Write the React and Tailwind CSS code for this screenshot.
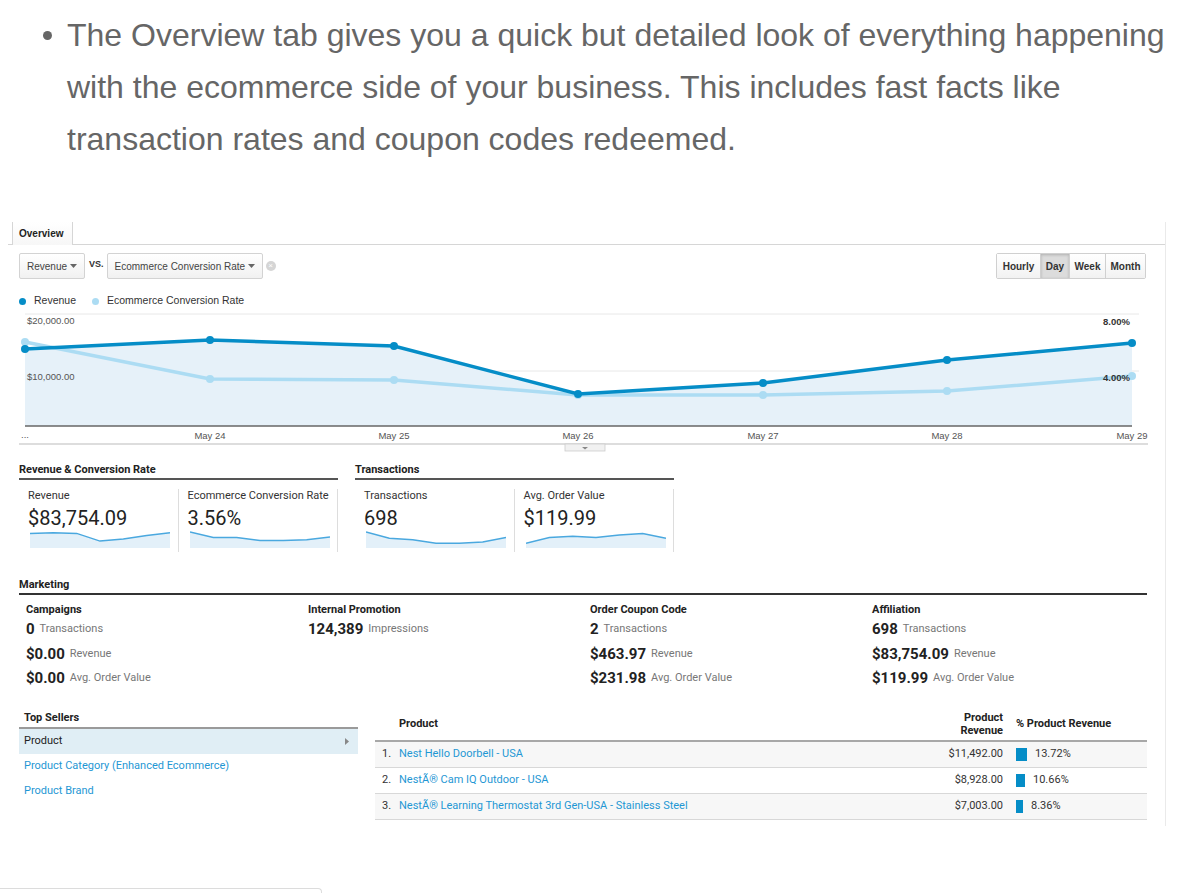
import React from 'react';

const BLUE = '#058dc7';
const LIGHT = '#acdcf3';

const chartX = [6, 191, 375, 559, 744, 928, 1113];
const revenueY = [39, 30, 36, 84, 73, 50, 33];
const convY = [32, 69, 70, 85, 85, 81, 66];
const xLabels = ['May 24', 'May 25', 'May 26', 'May 27', 'May 28', 'May 29'];

const pts = (ys) => chartX.map((x, i) => `${x},${ys[i]}`).join(' ');

const Caret = () => (
    <svg width="7" height="4" viewBox="0 0 7 4" className="shrink-0">
        <path d="M0 0h7L3.5 4z" fill="#666" />
    </svg>
);

const Dropdown = ({ label, className }) => (
    <div className={`h-[26px] flex items-center justify-between whitespace-nowrap pl-[7px] pr-[7px] border border-[#d3d3d3] rounded-[2px] bg-gradient-to-b from-white to-[#f1f1f1] text-[10px] text-[#444] ${className}`}>
        <span>{label}</span>
        <Caret />
    </div>
);

const Chart = () => (
    <svg width="1129" height="142" viewBox="0 0 1129 142" className="block mt-[2px]">
        <line x1="6" y1="4" x2="1120" y2="4" stroke="#e8e8e8" />
        <line x1="6" y1="61" x2="1120" y2="61" stroke="#e8e8e8" />
        <polygon points={`6,116 ${pts(revenueY)} 1113,116`} fill="#e6f1f9" />
        <polyline points={pts(convY)} fill="none" stroke={LIGHT} strokeWidth="3.5" />
        {chartX.map((x, i) => (
            <circle key={'c' + i} cx={x} cy={convY[i]} r="4" fill={LIGHT} />
        ))}
        <polyline points={pts(revenueY)} fill="none" stroke={BLUE} strokeWidth="3.5" />
        {chartX.map((x, i) => (
            <circle key={'r' + i} cx={x} cy={revenueY[i]} r="4" fill={BLUE} />
        ))}
        <line x1="6" y1="116" x2="1113" y2="116" stroke="#666" strokeWidth="1.5" />
        <g fontFamily="'Liberation Sans', Arial, sans-serif" fontSize="9.5" fill="#555">
            <text x="8" y="14">$20,000.00</text>
            <text x="8" y="70">$10,000.00</text>
            <text x="1111" y="15" textAnchor="end" fill="#333" fontWeight="bold">8.00%</text>
            <text x="1111" y="71" textAnchor="end" fill="#333" fontWeight="bold">4.00%</text>
            <text x="2" y="128">...</text>
            {xLabels.map((l, i) => (
                <text key={l} x={chartX[i + 1]} y="129" textAnchor="middle">{l}</text>
            ))}
        </g>
        <line x1="0" y1="134" x2="1129" y2="134" stroke="#ddd" strokeWidth="2" />
        <rect x="546" y="134" width="40" height="7" fill="#f1f1f1" stroke="#ccc" strokeWidth="0.8" />
        <path d="M563 137h6l-3 2.5z" fill="#888" />
    </svg>
);

const Sparkline = ({ values }) => {
    const w = 140;
    const h = 18;
    const step = w / (values.length - 1);
    const line = values.map((v, i) => `${(i * step).toFixed(1)},${(2 + v * 14).toFixed(1)}`).join(' ');
    return (
        <svg width={w} height={h} viewBox={`0 0 ${w} ${h}`} className="block mt-[1px] ml-[2px]">
            <polygon points={`0,${h} ${line} ${w},${h}`} fill="#e3f0f9" />
            <polyline points={line} fill="none" stroke="#4aa8df" strokeWidth="1.5" />
        </svg>
    );
};

const Card = ({ label, value, spark }) => (
    <div className="w-1/2 h-[63px] border-r border-[#ddd] pl-[9px]">
        <div className="text-[11px] leading-[14px] text-[#333]">{label}</div>
        <div className="mt-[4px] text-[20px] leading-[22px] text-[#222]">{value}</div>
        <Sparkline values={spark} />
    </div>
);

const Group = ({ title, cards }) => (
    <div className="w-[319px]">
        <div className="text-[11px] leading-[14px] font-bold text-[#222] pb-[1px] border-b-2 border-[#555]">{title}</div>
        <div className="flex mt-[9px]">
            {cards.map((c) => (
                <Card key={c.label} {...c} />
            ))}
        </div>
    </div>
);

const marketing = [
    { title: 'Campaigns', rows: [['0', 'Transactions'], ['$0.00', 'Revenue'], ['$0.00', 'Avg. Order Value']] },
    { title: 'Internal Promotion', rows: [['124,389', 'Impressions']] },
    { title: 'Order Coupon Code', rows: [['2', 'Transactions'], ['$463.97', 'Revenue'], ['$231.98', 'Avg. Order Value']] },
    { title: 'Affiliation', rows: [['698', 'Transactions'], ['$83,754.09', 'Revenue'], ['$119.99', 'Avg. Order Value']] },
];

const products = [
    { name: 'Nest Hello Doorbell - USA', rev: '$11,492.00', pct: '13.72%', bar: 11 },
    { name: 'NestÃ® Cam IQ Outdoor - USA', rev: '$8,928.00', pct: '10.66%', bar: 9 },
    { name: 'NestÃ® Learning Thermostat 3rd Gen-USA - Stainless Steel', rev: '$7,003.00', pct: '8.36%', bar: 7 },
];

export default function App() {
    return (
        <div className="w-[1189px] min-h-[893px] bg-white overflow-hidden">
            <div className="pt-[9px] flex font-['Liberation_Sans',Arial,sans-serif] text-[32px] leading-[52px] text-[#666]">
                <div className="w-[67px] flex justify-end pr-[15px] pt-[22px]">
                    <span className="block w-[9px] h-[9px] rounded-full bg-[#666]" />
                </div>
                <div>
                    <div className="whitespace-nowrap">The Overview tab gives you a quick but detailed look of everything happening</div>
                    <div className="whitespace-nowrap">with the ecommerce side of your business. This includes fast facts like</div>
                    <div className="whitespace-nowrap">transaction rates and coupon codes redeemed.</div>
                </div>
            </div>

            <div className="mt-[57px] ml-[8px] w-[1158px] border-r border-[#eaeaea] pb-[6px] font-['Roboto',sans-serif]">
                <div className="h-[23px] border-b border-[#d6d6d6] pl-[4px] flex items-end">
                    <div className="h-[23px] -mb-px w-[61px] pl-[6px] flex items-center border-l border-r border-[#d6d6d6] bg-gradient-to-b from-white to-[#f7f7f7] font-['Liberation_Sans',Arial,sans-serif] text-[10px] font-bold text-[#222]">
                        Overview
                    </div>
                </div>

                <div className="pl-[11px] pr-[18px]">
                    <div className="mt-[8px] flex items-center font-['Liberation_Sans',Arial,sans-serif]">
                        <Dropdown label="Revenue" className="w-[66px]" />
                        <span className="ml-[4px] mr-[3px] self-start mt-[5px] text-[9px] font-bold text-[#333]">VS.</span>
                        <Dropdown label="Ecommerce Conversion Rate" className="w-[156px]" />
                        <span className="ml-[3px] w-[10px] h-[10px] rounded-full bg-[#d5d5d5] flex items-center justify-center text-white text-[8px] leading-none">×</span>
                        <div className="ml-auto mr-[1px] flex h-[26px] border border-[#d0d0d0] rounded-[2px] text-[10px] font-bold text-[#333]">
                            <div className="w-[43px] flex items-center justify-center bg-gradient-to-b from-white to-[#f2f2f2]">Hourly</div>
                            <div className="w-[29px] flex items-center justify-center border-l border-[#d0d0d0] bg-[#dcdcdc] shadow-[inset_0_1px_3px_rgba(0,0,0,0.2)]">Day</div>
                            <div className="w-[36px] flex items-center justify-center border-l border-[#d0d0d0] bg-gradient-to-b from-white to-[#f2f2f2]">Week</div>
                            <div className="w-[40px] flex items-center justify-center border-l border-[#d0d0d0] bg-gradient-to-b from-white to-[#f2f2f2]">Month</div>
                        </div>
                    </div>

                    <div className="mt-[15px] h-[14px] flex items-center font-['Liberation_Sans',Arial,sans-serif] text-[10.5px] text-[#333]">
                        <span className="w-[7px] h-[7px] rounded-full bg-[#058dc7]" />
                        <span className="ml-[8px]">Revenue</span>
                        <span className="ml-[16px] w-[7px] h-[7px] rounded-full bg-[#acdcf3]" />
                        <span className="ml-[8px]">Ecommerce Conversion Rate</span>
                    </div>

                    <Chart />

                    <div className="mt-[11px] flex gap-[17px]">
                        <Group
                            title="Revenue & Conversion Rate"
                            cards={[
                                { label: 'Revenue', value: '$83,754.09', spark: [0.1, 0.05, 0.1, 0.65, 0.5, 0.25, 0.05] },
                                { label: 'Ecommerce Conversion Rate', value: '3.56%', spark: [0.0, 0.4, 0.4, 0.6, 0.6, 0.55, 0.35] },
                            ]}
                        />
                        <Group
                            title="Transactions"
                            cards={[
                                { label: 'Transactions', value: '698', spark: [0.0, 0.45, 0.55, 0.8, 0.8, 0.72, 0.4] },
                                { label: 'Avg. Order Value', value: '$119.99', spark: [0.8, 0.4, 0.3, 0.4, 0.22, 0.1, 0.45] },
                            ]}
                        />
                    </div>

                    <div className="mt-[26px] text-[11px] leading-[14px] font-bold text-[#222] pb-[1px] border-b-2 border-[#333]">Marketing</div>
                    <div className="grid grid-cols-4 mt-[8px]">
                        {marketing.map((col) => (
                            <div key={col.title} className="pl-[7px]">
                                <div className="text-[11px] leading-[14px] font-bold text-[#222]">{col.title}</div>
                                {col.rows.map(([v, l]) => (
                                    <div key={l} className="h-[24.5px] flex items-center">
                                        <span className="text-[15px] font-bold text-[#222]">{v}</span>
                                        <span className="ml-[5px] text-[11px] text-[#777]">{l}</span>
                                    </div>
                                ))}
                            </div>
                        ))}
                    </div>

                    <div className="mt-[18px] flex gap-[17px]">
                        <div className="w-[339px]">
                            <div className="pl-[5px] pt-[2px] text-[11px] leading-[14px] font-bold text-[#222]">Top Sellers</div>
                            <div className="mt-[2px] border-b-2 border-[#9a9a9a]" />
                            <div className="h-[25px] pl-[5px] pr-[9px] flex items-center justify-between bg-[#e0eef5] text-[11px] text-[#222]">
                                <span>Product</span>
                                <svg width="4" height="7" viewBox="0 0 4 7">
                                    <path d="M0 0l4 3.5L0 7z" fill="#888" />
                                </svg>
                            </div>
                            <div className="h-[25px] pl-[5px] flex items-center text-[11px] text-[#1f97d4]">Product Category (Enhanced Ecommerce)</div>
                            <div className="h-[25px] pl-[5px] flex items-center text-[11px] text-[#1f97d4]">Product Brand</div>
                        </div>

                        <div className="flex-1">
                            <div className="h-[33px] flex items-center border-b-2 border-[#a8a8a8] text-[11px] font-bold text-[#222]">
                                <div className="w-[24px]" />
                                <div className="flex-1">Product</div>
                                <div className="w-[120px] pr-[13px] text-right leading-[13px]">
                                    Product<br />Revenue
                                </div>
                                <div className="w-[131px]">% Product Revenue</div>
                            </div>
                            {products.map((p, i) => (
                                <div key={p.name} className={`h-[26px] flex items-center border-b border-[#d8d8d8] text-[11px] text-[#333] ${i % 2 === 0 ? 'bg-[#f7f7f7]' : 'bg-white'}`}>
                                    <div className="w-[24px] pl-[7px]">{i + 1}.</div>
                                    <div className="flex-1 text-[#1f97d4]">{p.name}</div>
                                    <div className="w-[120px] pr-[13px] text-right">{p.rev}</div>
                                    <div className="w-[131px] flex items-center">
                                        <span className="h-[13px] bg-[#058dc7]" style={{ width: p.bar }} />
                                        <span className="ml-[8px]">{p.pct}</span>
                                    </div>
                                </div>
                            ))}
                        </div>
                    </div>
                </div>
            </div>

            <div className="mt-[62px] w-[322px] h-[6px] border-t border-r border-[#dcdcdc] rounded-tr-[4px]" />
        </div>
    );
}
